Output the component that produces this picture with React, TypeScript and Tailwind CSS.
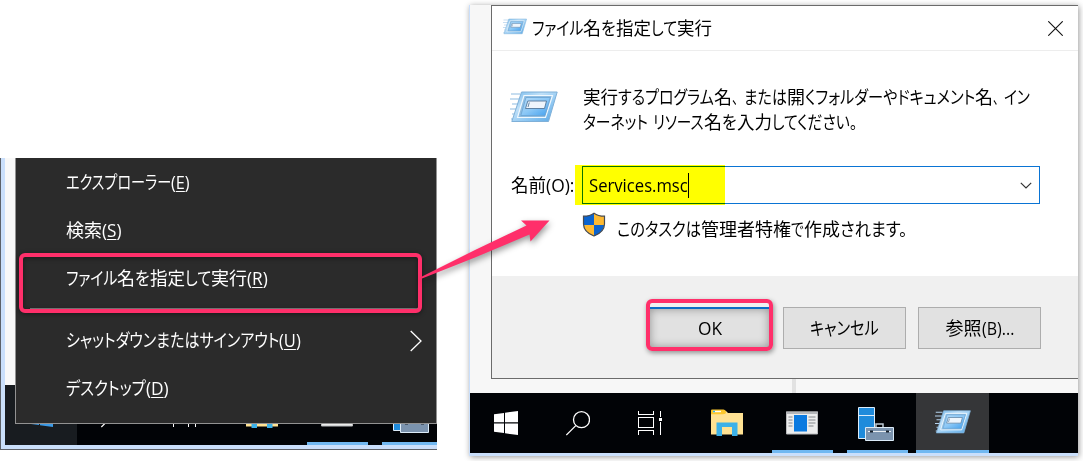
import { useLayoutEffect, useRef, type ReactNode } from "react";
import { clsx } from "clsx";

/** A run of text condensed or widened to an exact advance width. */
function Run({ w, kana = false, children }: { w: number; kana?: boolean; children: ReactNode }) {
  const ref = useRef<HTMLSpanElement>(null);
  useLayoutEffect(() => {
    const el = ref.current;
    if (el && el.offsetWidth) el.style.transform = `scaleX(${w / el.offsetWidth})`;
  }, [w]);
  return (
    <span className="inline-block shrink-0 whitespace-pre" style={{ width: w }}>
      <span
        ref={ref}
        className={clsx("inline-block origin-left", kana && "[font-feature-settings:'palt']")}
      >
        {children}
      </span>
    </span>
  );
}

function Line({ className, children }: { className?: string; children: ReactNode }) {
  return <div className={clsx("flex h-[25px] items-center leading-[25px]", className)}>{children}</div>;
}

function Key({ letter, w }: { letter: string; w: number }) {
  return (
    <Run w={w}>
      (<span className="underline decoration-1 underline-offset-2">{letter}</span>)
    </Run>
  );
}

function RunIcon({ className }: { className: string }) {
  return (
    <svg viewBox="0 0 48 32" className={className} fill="none">
      <defs>
        <linearGradient id="frame" x1="0" y1="0" x2="1" y2="1">
          <stop offset="0" stopColor="#6fb6ea" />
          <stop offset=".35" stopColor="#bfe0f8" />
          <stop offset=".65" stopColor="#8cc6f2" />
          <stop offset="1" stopColor="#5aa6e2" />
        </linearGradient>
        <linearGradient id="core" x1="0" y1="0" x2="1" y2="1">
          <stop offset="0" stopColor="#b4dbf8" />
          <stop offset=".5" stopColor="#8cc8f6" />
          <stop offset="1" stopColor="#3f9eee" />
        </linearGradient>
      </defs>
      <path d="M1 3h9M0 8h10M2 13h7M0 18h7M2 23h4M1 28h4" stroke="#b4d2ec" strokeWidth="1.500" />
      <path d="M11.500 1h35.700l-8.700 29.500H1.800z" fill="url(#frame)" stroke="#7fb0d8" strokeWidth="1" />
      <path d="M14 4.500h28.500L35.500 26.500H7.500z" fill="#8fbde0" stroke="#f0f8fe" strokeWidth="1.200" />
      <path d="M16 6.500h24.300L35 24.500H10.800z" fill="url(#core)" stroke="#6aa3d4" strokeWidth=".8" />
      <path d="M17.800 10h18.700l-2 7.500H15.500z" fill="#eef5fc" stroke="#54779a" strokeWidth=".9" />
      <path d="M19.300 11.500l-1.300 4.500" stroke="#54779a" strokeWidth=".9" />
    </svg>
  );
}

function WindowsLogo({ className }: { className?: string }) {
  return (
    <svg viewBox="0 0 24 24" className={clsx("h-6 w-6", className)} fill="currentColor">
      <path d="M0 3.300l10-1.400v9.400H0zM11 1.700L24 0v11.300H11zM0 12.400h10v9.700L0 20.800zM11 12.400h13V24l-13-1.700z" />
    </svg>
  );
}

function Shield() {
  return (
    <svg viewBox="0 0 24 25" className="h-[25px] w-6">
      <path d="M12 1.200C9 3.400 5.500 4.200 1.500 4.200V12c0 5 4 9.500 10.500 12z" fill="#0b63ce" />
      <path d="M12 1.200c3 2.200 6.500 3 10.500 3V12c0 5-4 9.500-10.500 12z" fill="#fdb931" />
      <path d="M12 13v11C6.500 22 2.600 18 1.700 13z" fill="#fdb931" />
      <path d="M12 13v11c5.500-2 9.400-6 10.300-11z" fill="#0b63ce" />
      <path
        d="M12 1.200c3 2.200 6.500 3 10.500 3V12c0 5-4 9.500-10.500 12C5.500 21.500 1.500 17 1.500 12V4.200C5.500 4.200 9 3.400 12 1.200z"
        fill="none"
        stroke="#474b52"
        strokeWidth="1.200"
      />
    </svg>
  );
}

function Taskbar({ startActive = false }: { startActive?: boolean }) {
  return (
    <div className="flex h-[60px] shrink-0 bg-[#010306]">
      <div
        className={clsx(
          "flex w-[72px] shrink-0 items-center justify-center",
          startActive ? "bg-[#181c20] text-[#3b9ae6]" : "text-white",
        )}
      >
        <WindowsLogo />
      </div>
      <div className="flex w-[72px] shrink-0 items-center justify-center">
        <svg viewBox="0 0 24 25" className="h-[25px] w-6" fill="none" stroke="#fff" strokeWidth="1.300">
          <circle cx="15.500" cy="8.700" r="8" />
          <path d="M9.800 14.600L.3 24" />
        </svg>
      </div>
      <div className="flex w-[72px] shrink-0 items-center justify-center">
        <svg viewBox="0 0 24 24" className="h-6 w-6" fill="none" stroke="#fff" shapeRendering="crispEdges">
          <path d="M.5 0v3.500h15V0M.5 6.500h15v10H.5zM.5 24v-4.500h15V24M22.500 0v6M22.500 11v13" />
          <path d="M21 7h3v3h-3z" fill="#fff" stroke="none" />
        </svg>
      </div>
      <div className="flex w-[82px] shrink-0 items-center justify-center">
        <svg viewBox="0 0 32 28" className="h-7 w-8">
          <path d="M0 2h15l2 2h15v21.500H0z" fill="#ffe293" />
          <path d="M0 1.500Q0 .5 1 .5h11.500Q15 .8 15 3t-3 2.200H0z" fill="#fcc72d" />
          <path d="M2 2.500h8" stroke="#fff" strokeWidth="1.400" />
          <path d="M2 2.500h2" stroke="#35b6ea" strokeWidth="1.400" />
          <path d="M5.500 27V13.500h21V27H21v-9H11v9z" fill="#3cb1e8" />
        </svg>
      </div>
      <div className="flex w-[68px] shrink-0 flex-col items-center">
        <div className="flex h-[57px] items-center pt-[3px]">
          <svg viewBox="0 0 32 24" className="h-6 w-8">
            <path d="M.5 1h31v22H.5z" fill="#eceded" stroke="#b9bbbd" />
            <path d="M0 .5h32V3H0z" fill="#b4b6b9" />
            <path d="M8 4h13v16.500H8z" fill="#0a7ae0" />
            <path
              d="M2.500 6h4M2.500 9h4M2.500 12h4M2.500 15h4M22.500 6h7M22.500 9h7M22.500 12h7M22.500 15h5"
              stroke="#85898d"
            />
          </svg>
        </div>
        <div className="h-[3px] w-[61px] bg-[#71b8f1]" />
      </div>
      <div className="flex w-[80px] shrink-0 flex-col items-center pl-[3px]">
        <div className="flex h-[57px] items-center pt-[5px] pr-[3px]">
          <svg viewBox="0 0 36 34" className="h-[34px] w-9" stroke="#dcecf9">
            <path d="M.5.5h16v31H.5z" fill="#1f8bdb" />
            <path d="M.5 8.500h16" />
            <path d="M18 20v-3h7v3" fill="none" stroke="#bfcbd6" strokeWidth="1.500" />
            <path d="M7.500 20.500h28v13h-28z" fill="#7b93ae" />
            <path d="M10 24.500h23" stroke="#e9eef3" />
            <path d="M12 24.500h3M28 24.500h3" stroke="#17202b" strokeWidth="2" />
          </svg>
        </div>
        <div className="h-[3px] w-[61px] bg-[#71b8f1]" />
      </div>
      <div className="flex w-[73px] shrink-0 flex-col items-center bg-[#353638]">
        <div className="flex h-[57px] items-center pt-px">
          <RunIcon className="h-6 w-9" />
        </div>
        <div className="h-[3px] w-full bg-[#71b8f1]" />
      </div>
    </div>
  );
}

function ContextMenu() {
  return (
    <div className="absolute top-0 left-[14px] flex h-[266px] w-[422px] flex-col border-r border-b border-l border-[#929292] bg-[#2b2b2b] text-white">
      <Line className="mt-[12px] ml-[50px]">
        <Run w={105} kana>エクスプローラー</Run>
        <Key letter="E" w={19} />
      </Line>
      <Line className="mt-[23px] ml-[50px]">
        <Run w={36}>検索</Run>
        <Key letter="S" w={20} />
      </Line>
      <Line className="mt-[23px] ml-[50px]">
        <Run w={51} kana>ファイル</Run>
        <Run w={18}>名</Run>
        <Run w={15} kana>を</Run>
        <Run w={35}>指定</Run>
        <Run w={26} kana>して</Run>
        <Run w={36}>実行</Run>
        <Key letter="R" w={21} />
      </Line>
      <div className="mt-[17px] ml-[14px] h-px w-[390px] bg-[#808080]" />
      <div className="mt-[19px] ml-[50px] flex items-center justify-between">
        <Line>
          <Run w={213} kana>シャットダウンまたはサインアウト</Run>
          <Key letter="U" w={22} />
        </Line>
        <svg viewBox="0 0 12 22" className="mr-[14px] h-[22px] w-3" fill="none" stroke="#fff" strokeWidth="1.300">
          <path d="M.7 1l10.300 10L.7 21" />
        </svg>
      </div>
      <Line className="mt-[23px] ml-[50px]">
        <Run w={80} kana>デスクトップ</Run>
        <Key letter="D" w={23} />
      </Line>
    </div>
  );
}

function StartMenuPanel() {
  return (
    <section className="relative mt-[158px] flex h-[292px] w-[437px] shrink-0 flex-col overflow-hidden border-b border-l border-[#5d6168] bg-[#cadffb] pb-[4px] pl-1">
      <div className="grow bg-[#f8f8f8]" />
      <Taskbar startActive />
      <ContextMenu />
    </section>
  );
}

function RunDialog() {
  return (
    <div className="ml-[21px] flex h-[374px] flex-col border-t border-b border-l border-[#6b6b6b] bg-white">
      <header className="flex h-[45px] shrink-0 items-center border-b border-[#ededed] pr-[15px] pl-[11px]">
        <RunIcon className="mb-[3px] h-[17px] w-6" />
        <Line className="ml-[5px]">
          <Run w={51} kana>ファイル</Run>
          <Run w={18}>名</Run>
          <Run w={15} kana>を</Run>
          <Run w={35}>指定</Run>
          <Run w={26} kana>して</Run>
          <Run w={35}>実行</Run>
        </Line>
        <svg viewBox="0 0 15 15" className="ml-auto h-[15px] w-[15px]" stroke="#111" strokeWidth="1.100">
          <path d="M.3.3l14.400 14.400M14.700.3L.3 14.700" />
        </svg>
      </header>
      <div className="flex grow flex-col">
        <div className="flex pt-[34px] pl-[18px]">
          <RunIcon className="mt-[6px] h-8 w-12" />
          <div className="ml-[25px] flex flex-col">
            <Line>
              <Run w={35}>実行</Run>
              <Run w={96} kana>するプログラム</Run>
              <Run w={18}>名</Run>
              <Run w={12}>、</Run>
              <Run w={43} kana>または</Run>
              <Run w={18}>開</Run>
              <Run w={170} kana>くフォルダーやドキュメント</Run>
              <Run w={18}>名</Run>
              <Run w={11}>、</Run>
              <Run w={26} kana>イン</Run>
            </Line>
            <Line>
              <Run w={65} kana>ターネット</Run>
              <Run w={5}> </Run>
              <Run w={51} kana>リソース</Run>
              <Run w={18}>名</Run>
              <Run w={15} kana>を</Run>
              <Run w={35}>入力</Run>
              <Run w={85} kana>してください。</Run>
            </Line>
          </div>
        </div>
        <div className="mt-[31px] flex items-center pl-[19px]">
          <Line>
            <Run w={35}>名前</Run>
            <Run w={28}>(O):</Run>
          </Line>
          <div className="relative ml-2 flex h-[38px] w-[458px] items-center justify-between border border-[#0a74d4] pr-[7px] pl-[6px]">
            <Line>
              <Run w={99}>Services.msc</Run>
              <span className="h-[25px] w-px bg-black" />
            </Line>
            <svg viewBox="0 0 12 7" className="h-[7px] w-3" fill="none" stroke="#333" strokeWidth="1.200">
              <path d="M.8.8L6 6 11.200.8" />
            </svg>
            <div className="absolute -top-[2px] -left-[8px] h-[40px] w-[150px] bg-[#ffff00] mix-blend-multiply" />
          </div>
        </div>
        <div className="mt-[8px] flex pl-[90px]">
          <Shield />
          <Line className="mt-[5px] ml-[11px]">
            <Run w={84} kana>このタスクは</Run>
            <Run w={90}>管理者特権</Run>
            <Run w={13} kana>で</Run>
            <Run w={36}>作成</Run>
            <Run w={67} kana>されます。</Run>
          </Line>
        </div>
      </div>
      <footer className="flex h-[102px] shrink-0 justify-end gap-3 bg-[#f0f0f0] pt-[31px] pr-[37px]">
        <button className="flex h-[42px] w-[123px] items-center justify-center border-2 border-[#0a6cc4] bg-[#e1e1e1] shadow-[inset_0_0_10px_rgba(0,0,0,0.35)]">
          <Run w={24}>OK</Run>
        </button>
        <button className="flex h-[42px] w-[123px] items-center justify-center border border-[#adadad] bg-[#e1e1e1]">
          <Run w={69} kana>キャンセル</Run>
        </button>
        <button className="flex h-[42px] w-[123px] items-center justify-center border border-[#adadad] bg-[#e1e1e1]">
          <Run w={36}>参照</Run>
          <Run w={32}>(B)...</Run>
        </button>
      </footer>
    </div>
  );
}

function RunPanel() {
  return (
    <section className="mt-[5px] ml-[32px] flex h-[451px] w-[609px] shrink-0 flex-col border-b-[3px] border-l border-[#cadffb] bg-[#f7f7f7] shadow-[1px_1px_6px_rgba(0,0,0,0.4)]">
      <RunDialog />
      <div className="flex h-[14px] shrink-0 pl-[322px]">
        <div className="w-1 bg-[#e2e2e2]" />
      </div>
      <Taskbar />
    </section>
  );
}

export default function App() {
  return (
    <main className="relative flex h-[461px] w-[1083px] items-start overflow-hidden bg-white font-['Open_Sans','Noto_Sans_CJK_JP',sans-serif] text-[18px] font-[370] text-black">
      <StartMenuPanel />
      <RunPanel />
      <div className="absolute top-[253px] left-[19px] h-[60px] w-[403px] rounded-[6px] border-4 border-[#ff2f6a] shadow-[0_1px_5px_rgba(0,0,0,0.45),inset_0_1px_5px_rgba(0,0,0,0.45)]" />
      <div className="absolute top-[299px] left-[646px] h-[52px] w-[127px] rounded-[6px] border-4 border-[#ff2f6a] shadow-[1px_2px_5px_rgba(0,0,0,0.4)]" />
      <svg
        viewBox="0 0 140 70"
        className="absolute top-[215px] left-[415px] h-[70px] w-[140px] drop-shadow-[1px_3px_3px_rgba(0,0,0,0.4)]"
      >
        <path d="M6 62L60 35l51.500-24.500-5.500-5H134.500L115.500 26.500l-1-7L60 42.500 7 63.500z" fill="#ff2f6a" />
      </svg>
    </main>
  );
}
